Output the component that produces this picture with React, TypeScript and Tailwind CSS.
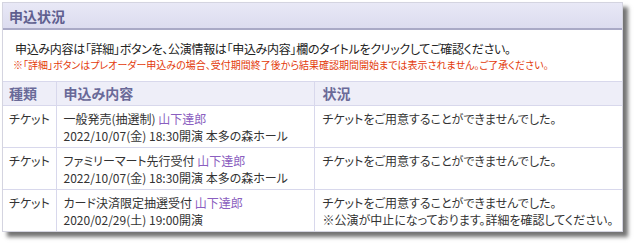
import React from "react";

const font = { fontFamily: '"Noto Sans CJK JP", "Noto Sans", sans-serif' };

const rows = [
  { kind: "チケット", title: "一般発売(抽選制)", artist: "山下達郎", date: "2022/10/07(金) 18:30開演 本多の森ホール", status: ["チケットをご用意することができませんでした。"] },
  { kind: "チケット", title: "ファミリーマート先行受付", artist: "山下達郎", date: "2022/10/07(金) 18:30開演 本多の森ホール", status: ["チケットをご用意することができませんでした。"] },
  { kind: "チケット", title: "カード決済限定抽選受付", artist: "山下達郎", date: "2020/02/29(土) 19:00開演", status: ["チケットをご用意することができませんでした。", "※公演が中止になっております。詳細を確認してください。"] },
];

export default function App() {
  return (
    <div className="w-[640px] h-[246px] bg-white overflow-hidden pt-[2px] pl-[2px]" style={font}>
      <div className="w-[621px] border border-[#d4d4e0] bg-white shadow-[5px_5px_4px_rgba(0,0,0,0.55)] [font-feature-settings:'palt']">
        <div className="h-[27px] bg-gradient-to-b from-[#e8e8f6] to-[#dcdcef] border-b-2 border-[#a9a9c6] flex items-center pl-[6px]">
          <span className="text-[14px] font-bold text-[#5f5f8f] leading-none">申込状況</span>
        </div>
        <div className="pt-[11px] pb-[9px]">
          <div className="pl-[12px] text-[12px] leading-[16px] tracking-[-0.3px] text-[#222]">申込み内容は「詳細」ボタンを、公演情報は「申込み内容」欄のタイトルをクリックしてご確認ください。</div>
          <div className="pl-[10px] text-[10px] leading-[15px] text-[#e33a0a]">※「詳細」ボタンはプレオーダー申込みの場合、受付期間終了後から結果確認期間開始までは表示されません。ご了承ください。</div>
        </div>
        <table className="w-full border-collapse text-[12px] text-[#333]">
          <thead>
            <tr className="bg-[#eeeef8] h-[24px]">
              <th className="w-[53px] text-left font-bold text-[14px] text-[#6a6a98] pl-[6px] border-t border-r border-[#d8d8ec]">種類</th>
              <th className="w-[258px] text-left font-bold text-[14px] text-[#6a6a98] pl-[7px] border-t border-r border-[#d8d8ec]">申込み内容</th>
              <th className="text-left font-bold text-[14px] text-[#6a6a98] pl-[8px] border-t border-[#d8d8ec]">状況</th>
            </tr>
          </thead>
          <tbody>
            {rows.map((r, i) => (
              <tr key={i} className="h-[40px] align-top">
                <td className="pl-[6px] pt-[4px] border-t border-r border-[#d8d8ec] leading-[17px]">{r.kind}</td>
                <td className="pl-[7px] pt-[4px] pb-[3px] border-t border-r border-[#d8d8ec] leading-[17px]">
                  <div>
                    {r.title} <span className="text-[#8b5fc0]">{r.artist}</span>
                  </div>
                  <div>{r.date}</div>
                </td>
                <td className="pl-[8px] pt-[4px] border-t border-[#d8d8ec] leading-[17px]">
                  {r.status.map((s, j) => (
                    <div key={j}>{s}</div>
                  ))}
                </td>
              </tr>
            ))}
          </tbody>
        </table>
      </div>
    </div>
  );
}
